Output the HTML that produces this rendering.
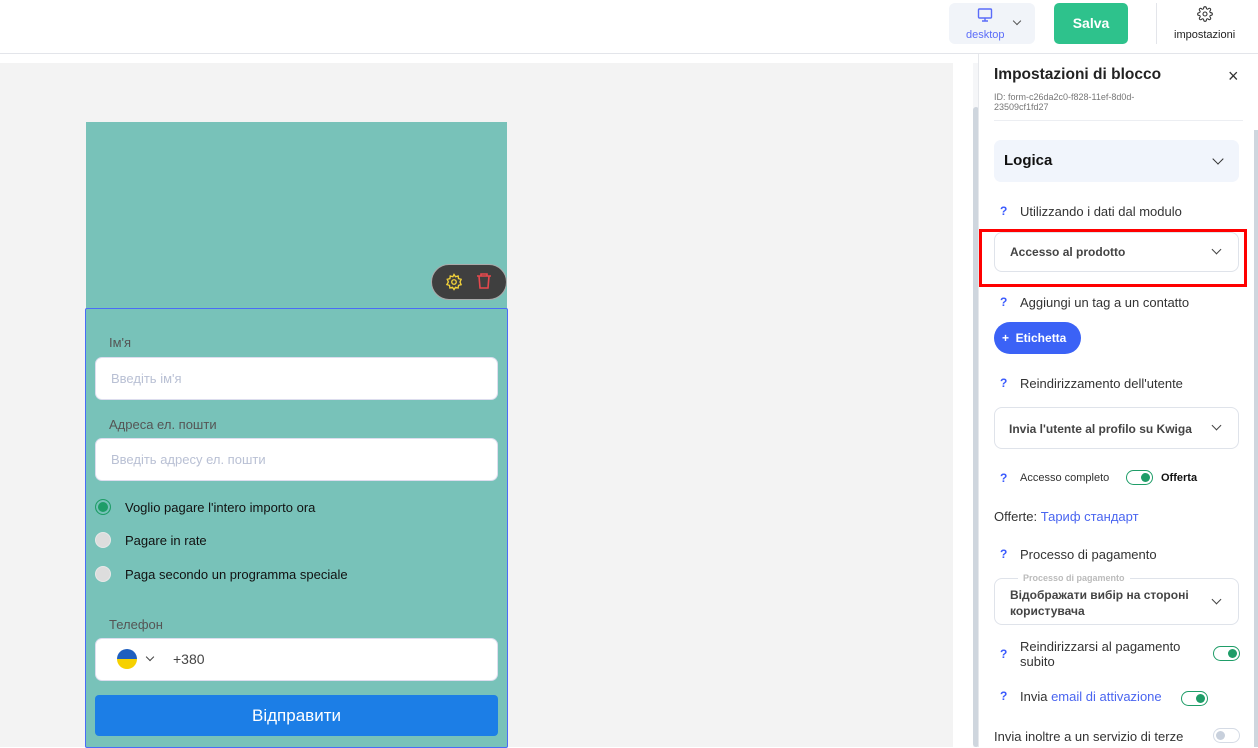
<!DOCTYPE html>
<html><head><meta charset="utf-8"><style>
*{box-sizing:border-box;margin:0;padding:0}
body{width:1258px;height:747px;overflow:hidden;background:#fff;font-family:"Liberation Sans","DejaVu Sans",sans-serif;position:relative}
.abs{position:absolute}
.q{color:#3b5bfd;font-weight:bold;font-size:12px;position:absolute;left:1000px}
.lbl{position:absolute;left:1020px;font-size:13px;color:#333}
.sel{position:absolute;left:994px;width:245px;border:1px solid #dfe3ea;border-radius:8px;background:#fff;font-size:12px;font-weight:bold;color:#444}
.chev{position:absolute;right:18px;width:7px;height:7px;border-right:1.4px solid #444;border-bottom:1.4px solid #444;transform:rotate(45deg)}
.tog{position:absolute;width:27px;height:15px;border:1.5px solid #1f9d68;border-radius:8px}
.tog::after{content:"";position:absolute;right:2px;top:1.5px;width:9px;height:9px;border-radius:50%;background:#1f9d68}
.fl{position:absolute;left:109px;font-size:13px;color:#555}
.in{position:absolute;left:95px;width:403px;height:43px;background:#fff;border-radius:7px;border:1px solid #dde;font-size:13px;color:#b9c0d4;padding:13px 0 0 15px}
.rad{position:absolute;left:95px;width:16px;height:16px;border-radius:50%;border:1.5px solid #e8e8e8;background:#ddd}
.rt{position:absolute;left:125px;font-size:13px;color:#111}
</style></head><body>
<div class="abs" style="left:0;top:53px;width:1258px;height:1px;background:#e3e5ea"></div>
<div class="abs" style="left:949px;top:3px;width:86px;height:41px;background:#f1f4f9;border-radius:6px"></div>
<svg class="abs" style="left:977px;top:8px" width="16" height="14" viewBox="0 0 16 14"><rect x="1.5" y="1" width="13" height="9" rx="1" fill="none" stroke="#5b6cf9" stroke-width="1.4"/><path d="M8 10v2.5M5 13h6" stroke="#5b6cf9" stroke-width="1.4"/></svg>
<div class="abs" style="left:966px;top:29px;font-size:11px;color:#5b6cf9">desktop</div>
<div class="abs" style="left:1014px;top:18px;width:6px;height:6px;border-right:1.5px solid #555;border-bottom:1.5px solid #555;transform:rotate(45deg)"></div>
<div class="abs" style="left:1054px;top:3px;width:74px;height:41px;background:#2ec28c;border-radius:5px;color:#fff;font-weight:bold;font-size:14px;text-align:center;line-height:41px">Salva</div>
<div class="abs" style="left:1156px;top:3px;width:1px;height:41px;background:#e3e5ea"></div>
<svg class="abs" style="left:1197px;top:6px" width="16" height="16" viewBox="0 0 24 24" fill="none" stroke="#333" stroke-width="1.6"><circle cx="12" cy="12" r="3"/><path d="M19.4 15a1.7 1.7 0 0 0 .3 1.8l.1.1a2 2 0 1 1-2.8 2.8l-.1-.1a1.7 1.7 0 0 0-1.8-.3 1.7 1.7 0 0 0-1 1.5V21a2 2 0 1 1-4 0v-.1a1.7 1.7 0 0 0-1.1-1.5 1.7 1.7 0 0 0-1.8.3l-.1.1a2 2 0 1 1-2.8-2.8l.1-.1a1.7 1.7 0 0 0 .3-1.8 1.7 1.7 0 0 0-1.5-1H3a2 2 0 1 1 0-4h.1a1.7 1.7 0 0 0 1.5-1.1 1.7 1.7 0 0 0-.3-1.8l-.1-.1a2 2 0 1 1 2.8-2.8l.1.1a1.7 1.7 0 0 0 1.8.3H9a1.7 1.7 0 0 0 1-1.5V3a2 2 0 1 1 4 0v.1a1.7 1.7 0 0 0 1 1.5 1.7 1.7 0 0 0 1.8-.3l.1-.1a2 2 0 1 1 2.8 2.8l-.1.1a1.7 1.7 0 0 0-.3 1.8V9a1.7 1.7 0 0 0 1.5 1H21a2 2 0 1 1 0 4h-.1a1.7 1.7 0 0 0-1.5 1z"/></svg>
<div class="abs" style="left:1174px;top:29px;font-size:11px;color:#222">impostazioni</div>
<div class="abs" style="left:0;top:63px;width:953px;height:684px;background:#f3f3f3"></div>
<div class="abs" style="left:973px;top:63px;width:6px;height:684px;background:#f5f6f8"></div>
<div class="abs" style="left:973px;top:107px;width:6px;height:640px;background:#cfd6de;border-radius:3px"></div>
<div class="abs" style="left:978px;top:54px;width:1px;height:693px;background:#e6e8ec"></div>
<div class="abs" style="left:86px;top:122px;width:421px;height:625px;background:#78c2b9"></div>
<div class="abs" style="left:85px;top:308px;width:423px;height:440px;border:1px solid #4a6cf7;border-radius:2px"></div>
<div class="abs" style="left:431px;top:264px;width:76px;height:36px;background:#3f3f3f;border-radius:18px;border:1px solid #aaa"></div>
<svg class="abs" style="left:445px;top:273px" width="18" height="18" viewBox="0 0 24 24" fill="none" stroke="#f2d23a" stroke-width="1.8"><circle cx="12" cy="12" r="3"/><path d="M12 2l2 3 3.5-1 .5 3.5 3.5 1-1.5 3.5 1.5 3.5-3.5 1-.5 3.5-3.5-1-2 3-2-3-3.5 1-.5-3.5-3.5-1L4.5 12 3 8.5l3.5-1L7 4l3.5 1z"/></svg>
<svg class="abs" style="left:476px;top:272px" width="16" height="18" viewBox="0 0 16 18" fill="none" stroke="#e5484d" stroke-width="1.6"><path d="M1 4h14M5 4V2h6v2M3 4l1 12h8l1-12"/></svg>
<div class="fl" style="top:335px">Ім'я</div>
<div class="in" style="top:357px">Введіть ім'я</div>
<div class="fl" style="top:417px">Адреса ел. пошти</div>
<div class="in" style="top:438px">Введіть адресу ел. пошти</div>
<div class="rad" style="top:499px;background:#1f9d68;box-shadow:inset 0 0 0 2px #78c2b9;border:1.5px solid #1f9d68"></div>
<div class="rt" style="top:500px">Voglio pagare l'intero importo ora</div>
<div class="rad" style="top:532px"></div>
<div class="rt" style="top:533px">Pagare in rate</div>
<div class="rad" style="top:566px"></div>
<div class="rt" style="top:567px">Paga secondo un programma speciale</div>
<div class="fl" style="top:617px">Телефон</div>
<div class="in" style="top:638px;padding:0"></div>
<div class="abs" style="left:117px;top:649px;width:20px;height:20px;border-radius:50%;background:linear-gradient(#1f5fbf 50%,#f6d100 50%)"></div>
<div class="abs" style="left:147px;top:654px;width:6px;height:6px;border-right:1.5px solid #444;border-bottom:1.5px solid #444;transform:rotate(45deg)"></div>
<div class="abs" style="left:173px;top:651px;font-size:14px;color:#444">+380</div>
<div class="abs" style="left:95px;top:695px;width:403px;height:41px;background:#1c7ee6;border-radius:4px;color:#fff;font-size:17px;text-align:center;line-height:41px">Відправити</div>
<div class="abs" style="left:994px;top:66px;font-size:15.5px;font-weight:bold;color:#222">Impostazioni di blocco</div>
<div class="abs" style="left:1228px;top:66px;font-size:18px;color:#333">×</div>
<div class="abs" style="left:994px;top:92px;font-size:9px;color:#777;line-height:10px">ID: form-c26da2c0-f828-11ef-8d0d-<br>23509cf1fd27</div>
<div class="abs" style="left:994px;top:120px;width:249px;height:1px;background:#eceef2"></div>
<div class="abs" style="left:1254px;top:130px;width:4px;height:617px;background:#cfd6de"></div>
<div class="abs" style="left:994px;top:140px;width:245px;height:42px;background:#f1f5fc;border-radius:7px"></div>
<div class="abs" style="left:1004px;top:152px;font-size:15px;font-weight:bold;color:#111">Logica</div>
<div class="abs" style="left:1214px;top:155px;width:8px;height:8px;border-right:1.6px solid #333;border-bottom:1.6px solid #333;transform:rotate(45deg)"></div>
<div class="q" style="top:204px">?</div><div class="lbl" style="top:204px">Utilizzando i dati dal modulo</div>
<div class="sel" style="top:232px;height:40px"><span style="position:absolute;left:15px;top:12px">Accesso al prodotto</span><div class="chev" style="top:13px"></div></div>
<div class="abs" style="left:979px;top:229px;width:268px;height:58px;border:3px solid #f00"></div>
<div class="q" style="top:295px">?</div><div class="lbl" style="top:295px">Aggiungi un tag a un contatto</div>
<div class="abs" style="left:994px;top:322px;width:87px;height:32px;background:#3b62f6;border-radius:16px;color:#fff;font-size:12px;font-weight:bold;line-height:32px;padding-left:8px">+ &nbsp;Etichetta</div>
<div class="q" style="top:376px">?</div><div class="lbl" style="top:376px">Reindirizzamento dell'utente</div>
<div class="sel" style="top:407px;height:42px"><span style="position:absolute;left:14px;top:14px">Invia l'utente al profilo su Kwiga</span><div class="chev" style="top:14px"></div></div>
<div class="q" style="top:471px">?</div><div class="abs" style="left:1020px;top:472px;font-size:11px;color:#333">Accesso completo</div>
<div class="tog" style="left:1126px;top:470px"></div>
<div class="abs" style="left:1161px;top:472px;font-size:11px;font-weight:bold;color:#111">Offerta</div>
<div class="abs" style="left:994px;top:509px;font-size:13px;color:#333">Offerte: <span style="color:#4a65f0">Тариф стандарт</span></div>
<div class="q" style="top:547px">?</div><div class="lbl" style="top:547px">Processo di pagamento</div>
<div class="sel" style="top:578px;height:47px"><span style="position:absolute;left:15px;top:8px;line-height:16px">Відображати вибір на стороні<br>користувача</span><div class="chev" style="top:17px"></div></div>
<div class="abs" style="left:1018px;top:573px;background:#fff;padding:0 5px;font-size:9px;font-weight:bold;color:#bbb">Processo di pagamento</div>
<div class="q" style="top:647px">?</div><div class="lbl" style="top:639px;line-height:15px">Reindirizzarsi al pagamento<br>subito</div>
<div class="tog" style="left:1213px;top:646px"></div>
<div class="q" style="top:689px">?</div><div class="lbl" style="top:689px">Invia <span style="color:#4a65f0">email di attivazione</span></div>
<div class="tog" style="left:1181px;top:691px"></div>
<div class="abs" style="left:994px;top:729px;font-size:13px;color:#333">Invia inoltre a un servizio di terze</div>
<div class="abs" style="left:1213px;top:728px;width:27px;height:15px;border:1.5px solid #d5dbe5;border-radius:8px"><div style="position:absolute;left:2px;top:1.5px;width:9px;height:9px;border-radius:50%;background:#c8d0dc"></div></div>
</body></html>
